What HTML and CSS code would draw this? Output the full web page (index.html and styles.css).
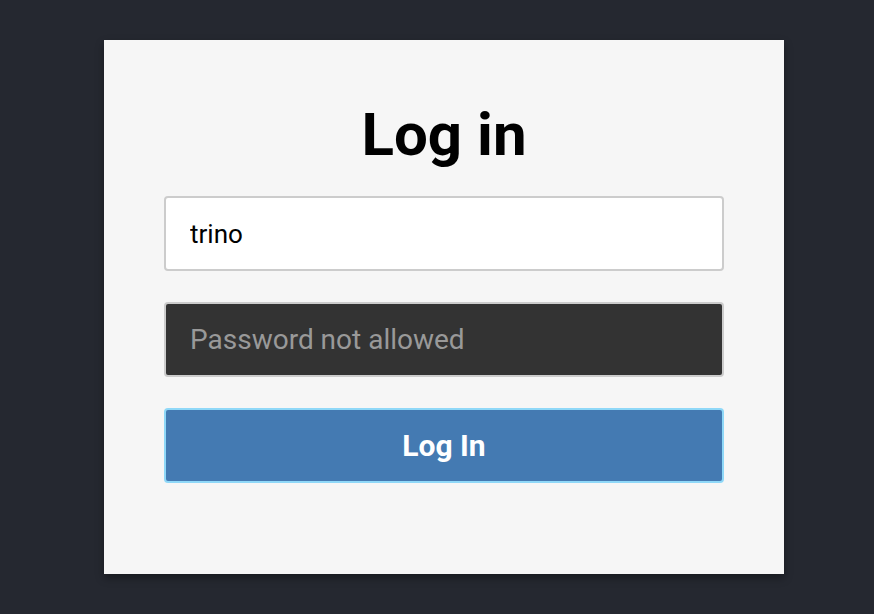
FILE: index.html
```html
<!DOCTYPE html>
<html>
<head>
<meta charset="utf-8">
<link rel="stylesheet" href="styles.css">
</head>
<body>
<div class="page">
  <form class="card">
    <h1 class="title">Log in</h1>
    <input class="field field-user" type="text" value="trino">
    <input class="field field-pass" type="password" placeholder="Password not allowed" disabled>
    <button class="btn" type="button">Log In</button>
  </form>
</div>
</body>
</html>
```
FILE: styles.css
```css
html, body {
  margin: 0;
  padding: 0;
  background: #252830;
  height: 100%;
}
.page {
  padding: 40px 0 0 104px;
}
.card {
  box-sizing: border-box;
  width: 680px;
  height: 534px;
  background: #f6f6f6;
  padding: 0 60px;
  display: flex;
  flex-direction: column;
  gap: 31px;
  box-shadow: 0 4px 8px rgba(0,0,0,0.35);
  font-family: Roboto, "Liberation Sans", sans-serif;
}
.title {
  margin: 58px 0 -7px;
  text-align: center;
  font-size: 60px;
  font-weight: 700;
  line-height: 74px;
  color: #000;
}
.field {
  box-sizing: border-box;
  width: 560px;
  height: 75px;
  border: 2px solid #cccccc;
  border-radius: 4px;
  padding: 0 24px;
  font-family: Roboto, "Liberation Sans", sans-serif;
  font-size: 26px;
  outline: none;
}
.field-user {
  background: #ffffff;
  color: #000;
}
.field-pass {
  background: #333333;
  color: #999;
  font-size: 28px;
}
.field-pass::placeholder {
  color: #999999;
  opacity: 1;
}
.btn {
  box-sizing: border-box;
  width: 560px;
  height: 75px;
  border: 2px solid #8fd8f8;
  border-radius: 4px;
  background: #447ab2;
  color: #fff;
  font-family: Roboto, "Liberation Sans", sans-serif;
  font-size: 30px;
  font-weight: 700;
}
```
